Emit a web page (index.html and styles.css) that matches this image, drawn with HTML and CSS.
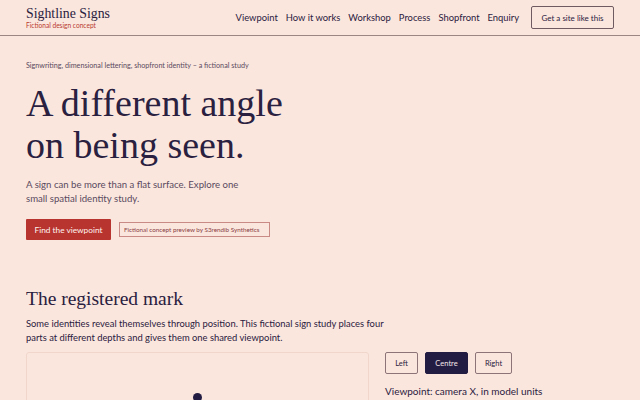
FILE: index.html
```html
<!DOCTYPE html>
<html>
	<head>
		<meta charset="utf-8" />
		<title>Sightline Signs</title>
		<link rel="stylesheet" href="styles.css">
	</head>
	<body>
		<header class="top">
			<div class="brand">
				<div class="brand-name">Sightline Signs</div>
				<div class="brand-sub">Fictional design concept</div>
			</div>
			<nav class="nav">
				<a href="#">Viewpoint</a>
				<a href="#">How it works</a>
				<a href="#">Workshop</a>
				<a href="#">Process</a>
				<a href="#">Shopfront</a>
				<a href="#">Enquiry</a>
				<a href="#" class="nav-cta">Get a site like this</a>
			</nav>
		</header>

		<section class="hero">
			<p class="eyebrow">Signwriting, dimensional lettering, shopfront identity – a fictional study</p>
			<h1>A different angle<br>on being seen.</h1>
			<p class="lead">A sign can be more than a flat surface. Explore one<br>small spatial identity study.</p>
			<div class="actions">
				<a href="#" class="btn-red">Find the viewpoint</a>
				<span class="tag">Fictional concept preview by S3rendib Synthetics</span>
			</div>
		</section>

		<section class="mark">
			<h2>The registered mark</h2>
			<p class="mark-text">Some identities reveal themselves through position. This fictional sign study places four<br>parts at different depths and gives them one shared viewpoint.</p>
			<div class="stage">
				<div class="canvas">
					<span class="dot"></span>
				</div>
				<div class="controls">
					<div class="views">
						<button>Left</button>
						<button class="on">Centre</button>
						<button>Right</button>
					</div>
					<p class="readout">Viewpoint: camera X, in model units</p>
				</div>
			</div>
		</section>
	</body>
</html>
```

FILE: styles.css
```css
*{
	margin:0px;
	padding:0px;
	box-sizing: border-box;
}
body{
	background: #fbe6dd;
	color: #2a2040;
	font-family: "Lato", "Noto Sans", sans-serif;
	overflow: hidden;
}
a{
	color: inherit;
	text-decoration: none;
}
.top{
	height: 36px;
	padding: 0 26px;
	display: flex;
	align-items: center;
	justify-content: space-between;
	border-bottom: 1px solid #9c8684;
}
.brand-name{
	font-family: "Liberation Serif", serif;
	font-size: 13.8px;
	line-height: 15px;
	color: #2a2040;
}
.brand-sub{
	font-size: 6.6px;
	color: #b83a30;
	line-height: 8px;
}
.nav{
	display: flex;
	align-items: center;
	gap: 8px;
	font-size: 9.4px;
	color: #2a2040;
}
.nav-cta{
	margin-left: 4px;
	border: 1px solid #6e5a60;
	border-radius: 2px;
	height: 23px;
	width: 83px;
	display: flex;
	align-items: center;
	justify-content: center;
	font-size: 8px;
}
.hero{
	padding: 25px 26px 0;
}
.eyebrow{
	font-size: 7.2px;
	color: #5a4a60;
}
h1{
	font-family: "Liberation Serif", serif;
	font-weight: normal;
	font-size: 38px;
	line-height: 42px;
	margin-top: 12px;
	color: #2a2040;
}
.lead{
	margin-top: 12px;
	font-size: 9.6px;
	line-height: 13.5px;
	color: #5a4a60;
}
.actions{
	margin-top: 14px;
	display: flex;
	align-items: center;
	gap: 8px;
}
.btn-red{
	background: #b8342e;
	color: #fff3ee;
	font-size: 8.3px;
	width: 85px;
	height: 21px;
	display: flex;
	align-items: center;
	justify-content: center;
	border-radius: 1px;
}
.tag{
	font-size: 6.3px;
	color: #8a4044;
	border: 1px solid #c98a86;
	padding: 3px 4px;
	width: 151px;
}
.mark{
	padding: 47px 26px 0;
}
h2{
	font-family: "Liberation Serif", serif;
	font-weight: normal;
	font-size: 19.5px;
	line-height: 24px;
	color: #2a2040;
}
.mark-text{
	margin-top: 6px;
	font-size: 9.4px;
	line-height: 13.5px;
	color: #2a2040;
}
.stage{
	margin-top: 8px;
	display: flex;
	gap: 16px;
}
.canvas{
	width: 343px;
	height: 120px;
	border: 1px solid #f0d6cb;
	border-radius: 3px;
	position: relative;
}
.dot{
	position: absolute;
	left: 166px;
	top: 40px;
	width: 9px;
	height: 9px;
	border-radius: 50%;
	background: #231c42;
}
.views{
	display: flex;
	gap: 7px;
}
.views button{
	font-family: inherit;
	font-size: 7.5px;
	background: transparent;
	color: #2a2040;
	border: 1px solid #8c7478;
	border-radius: 2px;
	height: 22px;
	width: 33px;
}
.views button.on{
	background: #231c42;
	color: #f3e6e8;
	border-color: #231c42;
	width: 43px;
}
.views button:last-child{
	width: 37px;
}
.readout{
	margin-top: 11px;
	font-size: 10px;
	color: #2a2040;
}
```
